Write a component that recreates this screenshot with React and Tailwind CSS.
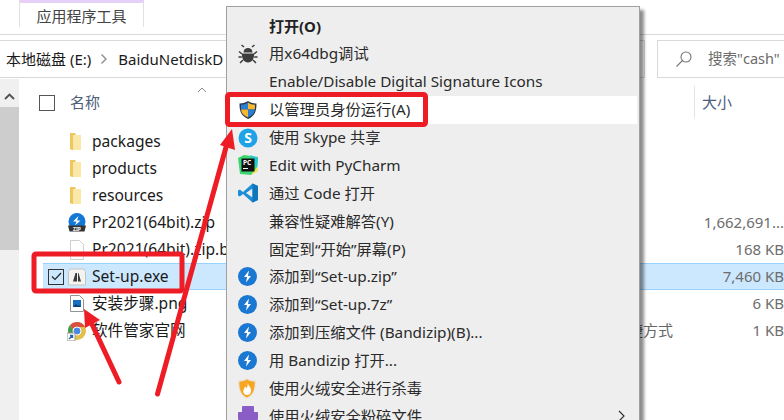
const fuente = { fontFamily: '"Noto Sans", "Noto Sans CJK SC", sans-serif' };

const archivos = [
  { nombre: "packages", icono: "carpeta" },
  { nombre: "products", icono: "carpeta" },
  { nombre: "resources", icono: "carpeta" },
  { nombre: "Pr2021(64bit).zip", icono: "zip", tam: "1,662,691..." },
  { nombre: "Pr2021(64bit).zip.bak", icono: "hoja", tam: "168 KB" },
  { nombre: "Set-up.exe", icono: "adobe", tam: "7,460 KB", sel: true },
  { nombre: "安装步骤.png", icono: "png", tam: "6 KB" },
  { nombre: "软件管家官网", icono: "chrome", tam: "1 KB", tipo: "快捷方式" },
];

const menu = [
  { t: "打开(O)", bold: true },
  { t: "用x64dbg调试", i: "bug" },
  { t: "Enable/Disable Digital Signature Icons" },
  { t: "以管理员身份运行(A)", i: "shield", activo: true },
  { t: "使用 Skype 共享", i: "skype" },
  { t: "Edit with PyCharm", i: "pc" },
  { t: "通过 Code 打开", i: "code" },
  { t: "兼容性疑难解答(Y)" },
  { t: "固定到“开始”屏幕(P)" },
  { t: "添加到“Set-up.zip”", i: "bz" },
  { t: "添加到“Set-up.7z”", i: "bz" },
  { t: "添加到压缩文件 (Bandizip)(B)...", i: "bz" },
  { t: "用 Bandizip 打开...", i: "bz" },
  { t: "使用火绒安全进行杀毒", i: "huorong" },
  { t: "使用火绒安全粉碎文件", i: "shred", flecha: true },
];

function IconoArchivo({ tipo }) {
  if (tipo === "carpeta")
    return (
      <svg width="16" height="20" viewBox="0 0 16 20">
        <path d="M1 1h5l1 2h5v15H3l-2-1z" fill="#eec65f" />
        <path d="M4 3h8v15H4z" fill="#fbe7a8" />
      </svg>
    );
  if (tipo === "zip")
    return (
      <svg width="20" height="20" viewBox="0 0 20 20">
        <circle cx="10" cy="8.500" r="8.500" fill="#1377d6" />
        <path d="M11.500 3L6 8.500h3.500L8 12.500l5.500-5H10z" fill="#fff" />
        <path d="M1 12.500h18l-1.500 6h-15z" fill="#333" />
        <text x="10" y="17.500" textAnchor="middle" fontSize="5" fontWeight="700" fill="#fff">ZIP</text>
      </svg>
    );
  if (tipo === "hoja")
    return (
      <svg width="14" height="20" viewBox="0 0 14 20">
        <path d="M.5.5h9l4 4v15H.5z" fill="#fff" stroke="#cfcfcf" />
      </svg>
    );
  if (tipo === "adobe")
    return (
      <svg width="20" height="18" viewBox="0 0 20 18">
        <path d="M1.500 3.500L3 1h14l1.500 2.500V17h-17z" fill="#f4f3f1" stroke="#c4c4c4" />
        <path d="M6 13.500L8.500 5H10v8.500zM14 13.500L11.500 5H11v8.500z" fill="#3a3a3a" />
      </svg>
    );
  if (tipo === "png")
    return (
      <svg width="14" height="17" viewBox="0 0 14 17">
        <path d="M.5.5h9l4 4v12H.5z" fill="#fff" stroke="#939393" />
        <rect x="3" y="5" width="8" height="7" fill="#1a6ec0" />
        <path d="M3 12l3-3 2 2 1-1 2 2z" fill="#0b3f78" />
      </svg>
    );
  return (
    <svg width="20" height="20" viewBox="0 0 20 20">
      <circle cx="10" cy="10" r="9" fill="#e2c14a" />
      <path d="M10 1a9 9 0 0 1 8 5H10a4 4 0 0 0-4 3L3 4a9 9 0 0 1 7-3z" fill="#d9503f" />
      <path d="M3 4l4 7 1 6-1 1a9 9 0 0 1-4-14z" fill="#3d9b4f" />
      <circle cx="10" cy="10" r="4" fill="#4a86e8" stroke="#fff" />
      <rect x="0" y="12" width="8" height="8" fill="#fff" stroke="#9a9a9a" />
      <path d="M2 18l3-3M3 14.500h2.500V17" stroke="#1a5fb4" strokeWidth="1.300" fill="none" />
    </svg>
  );
}

function IconoMenu({ tipo }) {
  if (tipo === "bug")
    return (
      <svg width="20" height="20" viewBox="0 0 20 20" fill="#3c3c3c">
        <path d="M4 9.500h12c.5 5-2 9-6 9s-6.500-4-6-9z" />
        <path d="M5.500 8.500a4.500 4.500 0 0 1 9 0z" />
        <path d="M6 3L3.500 1M14 3l2.500-2M4 10L1 7.500M16 10l3-2.500M3.800 13H.5M16.200 13h3.300M5 16l-3 3M15 16l3 3" stroke="#3c3c3c" strokeWidth="1.500" fill="none" />
      </svg>
    );
  if (tipo === "shield")
    return (
      <svg width="20" height="20" viewBox="0 0 20 20">
        <path d="M10 1c2 1.500 5 2.500 8.500 2.500 0 7-1 12-8.500 15.500C2.500 15.500 1.500 10.500 1.500 3.500 5 3.500 8 2.500 10 1z" fill="#25394f" />
        <path d="M10 2.500v7H3C3 7.500 3 6 3 4.800c2.800 0 5-1 7-2.300z" fill="#2a7fd4" />
        <path d="M10 2.500c2 1.300 4.200 2.300 7 2.300 0 1.200 0 3-.2 4.700H10z" fill="#f7b82f" />
        <path d="M3 9.500h7v8C5 15 3.500 13 3 9.500z" fill="#f7b82f" />
        <path d="M10 9.500h6.800c-.6 3.500-2 5.500-6.800 8z" fill="#2a7fd4" />
      </svg>
    );
  if (tipo === "skype")
    return (
      <svg width="20" height="20" viewBox="0 0 20 20">
        <circle cx="10" cy="10" r="9.500" fill="#1fa3e6" />
        <text x="10" y="15" textAnchor="middle" fontSize="14" fontWeight="700" fill="#fff" style={fuente}>S</text>
      </svg>
    );
  if (tipo === "pc")
    return (
      <svg width="20" height="20" viewBox="0 0 20 20">
        <path d="M0 3l6-3 14 2-1 12-6 6-11-1z" fill="#3bd66f" />
        <path d="M12 0l8 3-1 11z" fill="#21c7d9" />
        <path d="M13 20l6-8 1 4z" fill="#f4e34b" />
        <rect x="3.500" y="3.500" width="13" height="13" fill="#111" />
        <text x="5" y="10" fontSize="6.500" fontWeight="700" fill="#fff" style={fuente}>PC</text>
        <rect x="5" y="13" width="5" height="1" fill="#fff" />
      </svg>
    );
  if (tipo === "code")
    return (
      <svg width="20" height="20" viewBox="0 0 20 20">
        <path d="M14.500 0.500L20 3v14l-5.500 2.500L5 11 1.800 13.500 0 12.500v-5L1.800 6.500 5 9z" fill="#1c8fd8" />
        <path d="M14.500 5.500L8 10l6.500 4.500z" fill="#eeeeee" />
        <path d="M14.500 0.500L20 3v14l-5.500 2.500z" fill="#0f75bd" />
      </svg>
    );
  if (tipo === "bz")
    return (
      <svg width="19" height="19" viewBox="0 0 19 19">
        <circle cx="9.500" cy="9.500" r="9.500" fill="#1a77d2" />
        <path d="M11 3.500L6 10h3l-1 5.500 5-6.500h-3z" fill="#fff" />
      </svg>
    );
  if (tipo === "huorong")
    return (
      <svg width="18" height="21" viewBox="0 0 18 21">
        <path d="M9 0c2.500 1.500 5.500 2.500 9 2.500 0 8-1 14-9 18.500-8-4.500-9-10.500-9-18.500 3.500 0 6.500-1 9-2.500z" fill="#e9e3d6" />
        <path d="M9 1.500c2.300 1.300 4.800 2.200 7.700 2.200 0 7-1 12.500-7.700 15.800-6.700-3.300-7.700-8.800-7.700-15.800 2.900 0 5.400-.9 7.700-2.200z" fill="#f6a623" />
        <path d="M9.500 5c1 3 4 4.500 3.500 8.500-.3 2.500-2 3.500-4 3.500s-3.500-1.500-3.700-3.500C5 11 7 10.500 7 8.500c1 .5 1.500 1 1.500 2 1-1.500 1.500-3.500 1-5.500z" fill="#fff" />
      </svg>
    );
  if (tipo === "shred")
    return (
      <svg width="20" height="20" viewBox="0 0 20 20">
        <rect x="4" y="0" width="12" height="8" rx="1" fill="#8a5cc6" />
        <rect x="0" y="6" width="20" height="8" rx="1" fill="#8a5cc6" />
        <path d="M3 14h14v6H3z" fill="#a988d8" />
      </svg>
    );
  return null;
}

export default function App() {
  return (
    <div className="relative w-[784px] h-[420px] overflow-hidden bg-white text-[15.3px] text-[#1a1a1a]" style={fuente}>
      {/* cinta */}
      <div className="h-[35px] border-b border-[#dadada] pl-[19px]">
        <div className="w-[125px] h-[27px] bg-white border-x border-[#e2e2e2] border-t-[3px] border-t-[#e6d0f7] text-center text-[15px] leading-[27px] text-[#444]">
          应用程序工具
        </div>
      </div>

      {/* direccion y busqueda */}
      <div className="flex items-stretch h-[44px] pt-[5px] pb-[1px]">
        <div className="w-[645px] flex items-center border-y border-r border-[#d9d9d9] pl-[6px] text-[15px] whitespace-nowrap overflow-hidden">
          <span>本地磁盘 (E:)</span>
          <svg width="8" height="12" viewBox="0 0 8 12" className="ml-[9px] mr-[10px]">
            <path d="M1.500 1.500L6 6l-4.500 4.500" fill="none" stroke="#8c8c8c" strokeWidth="1.400" />
          </svg>
          <span>BaiduNetdiskD</span>
        </div>
        <div className="w-[127px] ml-[12px] flex items-center border-y border-l border-[#d9d9d9] whitespace-nowrap text-[14.500px] text-[#6b6b6b]">
          <svg width="18" height="18" viewBox="0 0 18 18" className="ml-[17px] mr-[15px] shrink-0">
            <circle cx="11" cy="7" r="5" fill="none" stroke="#777" strokeWidth="1.100" />
            <path d="M7.500 10.500L1.500 16.500" stroke="#777" strokeWidth="1.100" />
          </svg>
          <span>搜索"cash"</span>
        </div>
      </div>

      {/* contenido */}
      <div className="flex h-[341px]">
        <div className="w-[19px] bg-[#f0f0f0] flex flex-col">
          <div className="h-[28px] pt-[6px] flex items-center justify-center">
            <svg width="11" height="7" viewBox="0 0 11 7">
              <path d="M1 6l4.500-4.500L10 6" fill="none" stroke="#505050" strokeWidth="1.800" />
            </svg>
          </div>
          <div className="h-[143px] bg-[#cdcdcd]" />
        </div>
        <div className="w-[4px]" />

        <div className="flex-1 relative min-w-0">
          {/* cabecera */}
          <div className="relative h-[46px] flex items-center text-[15px] text-[#4c607a] pl-[16px]">
            <div className="w-[16px] h-[16px] border border-[#555] mt-[2px]" />
            <span className="ml-[15px] mt-[1px]">名称</span>
            <svg width="10" height="6" viewBox="0 0 10 6" className="absolute left-[174px] top-[8px]">
              <path d="M1 5l4-4 4 4" fill="none" stroke="#8a8a8a" strokeWidth="1" />
            </svg>
            <div className="ml-auto flex items-center h-[32px] border-l border-[#e5e5e5] pl-[7px] w-[90px]">大小</div>
          </div>

          <div className="pt-[3px]">
            {archivos.map((f) => (
              <div
                key={f.nombre}
                className={
                  "h-[27px] flex items-center whitespace-nowrap ml-[20px] " +
                  (f.sel ? "bg-[#cce8ff] border-y border-[#99d1ff]" : "")
                }
              >
                <div className="w-[5px] shrink-0">
                  {f.sel && (
                    <div className="w-[16px] h-[16px] ml-[5px] border border-[#333] flex items-center justify-center">
                      <svg width="11" height="9" viewBox="0 0 11 9">
                        <path d="M1 4.500L4 7.500 10 1" fill="none" stroke="#222" strokeWidth="1.200" />
                      </svg>
                    </div>
                  )}
                </div>
                <div className="w-[20px] ml-[19px] flex justify-center shrink-0">
                  <IconoArchivo tipo={f.icono} />
                </div>
                <span className="ml-[5px] w-[250px] text-[15.6px]">{f.nombre}</span>
                {f.tipo && <span className="absolute left-[590px] text-[15px] text-[#666]">{f.tipo}</span>}
                <span className="ml-auto text-[15px] text-[#6d6d6d]">{f.tam}</span>
              </div>
            ))}
          </div>
        </div>
      </div>

      {/* menu contextual */}
      <div className="absolute left-[226px] top-[6px] w-[414px] h-[420px] bg-[#eeeeee] border border-[#a0a0a0] pt-[5px] pl-[1px] pr-[2px] shadow-[4px_4px_3px_rgba(0,0,0,0.45)]">
        {menu.map((m) => (
          <div
            key={m.t}
            className={"h-[27.9px] flex items-center whitespace-nowrap relative " + (m.activo ? "bg-white" : "")}
          >
            <div className="w-[41px] pl-[10px] shrink-0 flex items-center">
              {m.i && <IconoMenu tipo={m.i} />}
            </div>
            <span className={m.bold ? "font-bold text-[15px] text-[#222]" : "text-[#2a2a2a]"}>{m.t}</span>
            {m.flecha && (
              <svg width="8" height="12" viewBox="0 0 8 12" className="absolute right-[11px] top-[8px]">
                <path d="M1 1l5 5-5 5" fill="none" stroke="#333" strokeWidth="1.200" />
              </svg>
            )}
          </div>
        ))}
      </div>

      {/* anotaciones */}
      <svg width="784" height="420" viewBox="0 0 784 420" className="absolute left-0 top-0 pointer-events-none">
        <rect x="34" y="254" width="148" height="37" rx="2" fill="none" stroke="#ee1c25" strokeWidth="5" />
        <rect x="227.500" y="94.500" width="198" height="30" rx="2" fill="none" stroke="#ee1c25" strokeWidth="5" />
        <path d="M157.500 394L228 140" stroke="#ee1c25" strokeWidth="5" strokeLinecap="round" />
        <path d="M232 129L220 145 235 150z" fill="#ee1c25" />
        <path d="M119 382L90 320" stroke="#ee1c25" strokeWidth="5" strokeLinecap="round" />
        <path d="M84 309L85 328 100 320z" fill="#ee1c25" />
      </svg>
    </div>
  );
}
